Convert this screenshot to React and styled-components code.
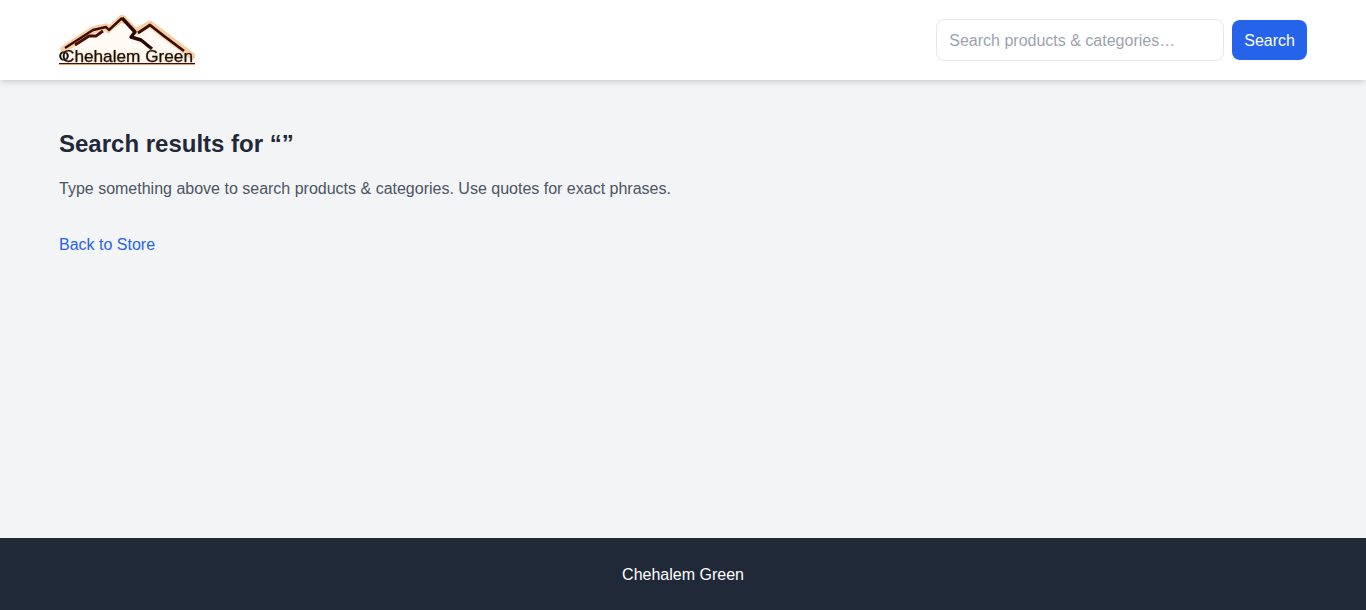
import styled, { createGlobalStyle } from "styled-components";

const GlobalStyle = createGlobalStyle`
  * {
    box-sizing: border-box;
  }
  body {
    margin: 0;
    font-family: "Liberation Sans", Arial, sans-serif;
    line-height: 1.6;
    background: #f3f4f6;
    color: #1f2937;
  }
`;

const Page = styled.div`
  min-height: 610px;
  display: flex;
  flex-direction: column;
`;

const Header = styled.header`
  height: 80px;
  padding: 0 59px;
  display: flex;
  align-items: center;
  justify-content: space-between;
  background: #fff;
  box-shadow: 0 4px 6px -1px rgba(0, 0, 0, 0.1), 0 2px 4px -2px rgba(0, 0, 0, 0.1);
`;

const LogoLink = styled.a`
  display: block;
  width: 136px;
  height: 50px;
`;

const LogoText = styled.text`
  font-family: "Liberation Sans", Arial, sans-serif;
  font-size: 17px;
  fill: #111;
  stroke: #111;
  stroke-width: 0.25px;
  filter: drop-shadow(0 0 1px #f5c998);
`;

const SearchForm = styled.form`
  display: flex;
  align-items: center;
  gap: 8px;
`;

const SearchInput = styled.input`
  width: 288px;
  height: 42px;
  padding: 10px 12px 8px;
  border: 1px solid #e5e7eb;
  border-radius: 8px;
  background: #fff;
  font: 16px/1.4 "Liberation Sans", Arial, sans-serif;
  color: #1f2937;
  outline: none;

  &::placeholder {
    color: #9ca3af;
    opacity: 1;
  }
`;

const SearchButton = styled.button`
  height: 40px;
  padding: 2px 12px 0;
  border: 0;
  border-radius: 8px;
  background: #2563eb;
  color: #fff;
  font: 16px "Liberation Sans", Arial, sans-serif;
`;

const Main = styled.main`
  flex: 1;
  padding: 48px 59px 0;
`;

const Title = styled.h1`
  margin: 0 0 16px;
  font-size: 24px;
  line-height: 32px;
  font-weight: 700;
  color: #1f2937;
`;

const Hint = styled.p`
  margin: 0 0 30px;
  font-size: 16px;
  color: #4b5563;
`;

const BackLink = styled.a`
  font-size: 16px;
  color: #2563eb;
  text-decoration: none;
`;

const Footer = styled.footer`
  height: 72px;
  padding-top: 24px;
  text-align: center;
  background: #1f2937;
  color: #fff;
  font-size: 16px;
`;

const ridge = "M5 34 L20 24 L34 15 L47 12 L50 15 L63 3 L77 17 L91 9 L104 19 L133 41";

function Logo() {
  return (
    <svg width="136" height="50" viewBox="0 0 136 50">
      <path d={`${ridge} L133 47 L5 47 Z`} fill="#fffaf3" />
      <path d={ridge} fill="none" stroke="#f6cfa0" strokeWidth="7" strokeLinejoin="round" strokeLinecap="round" />
      <path d="M24 32 L35 24 L47 21 L53 15 L62 9 L70 17 L73 23 L84 28 L95 34 L116 34 L103 24 L92 15 L80 22 L66 8 L53 19 L47 18 L34 21 Z" fill="#fffaf3" />
      <path d="M6 33 L20 24 L34 15 L47 12 L50 15 L63 3" fill="none" stroke="#3a0b05" strokeWidth="2.4" strokeLinejoin="round" />
      <path d="M16 30 L30 21 L37 21 L44 16" fill="none" stroke="#4a0d05" strokeWidth="2.8" strokeLinejoin="round" />
      <path d="M63 3 L76 17 L72 22 L82 25 L93 34" fill="none" stroke="#2c0703" strokeWidth="3.4" strokeLinejoin="round" />
      <path d="M79 18 L91 10 L105 21 L125 36" fill="none" stroke="#3a0b05" strokeWidth="2.8" strokeLinejoin="round" />
      <circle cx="5" cy="41" r="3.8" fill="none" stroke="#111" strokeWidth="2" />
      <LogoText x="3" y="47" textLength="131" lengthAdjust="spacingAndGlyphs">Chehalem Green</LogoText>
      <rect x="0" y="48" width="136" height="1" fill="#4a0d05" />
      <rect x="0" y="49" width="136" height="1" fill="#e3a06e" />
    </svg>
  );
}

function App() {
  return (
    <>
      <GlobalStyle />
      <Page>
        <Header>
          <LogoLink href="#">
            <Logo />
          </LogoLink>
          <SearchForm onSubmit={(e) => e.preventDefault()}>
            <SearchInput placeholder="Search products & categories…" />
            <SearchButton>Search</SearchButton>
          </SearchForm>
        </Header>
        <Main>
          <Title>Search results for “”</Title>
          <Hint>Type something above to search products &amp; categories. Use quotes for exact phrases.</Hint>
          <BackLink href="#">Back to Store</BackLink>
        </Main>
        <Footer>Chehalem Green</Footer>
      </Page>
    </>
  );
}

export default App;
